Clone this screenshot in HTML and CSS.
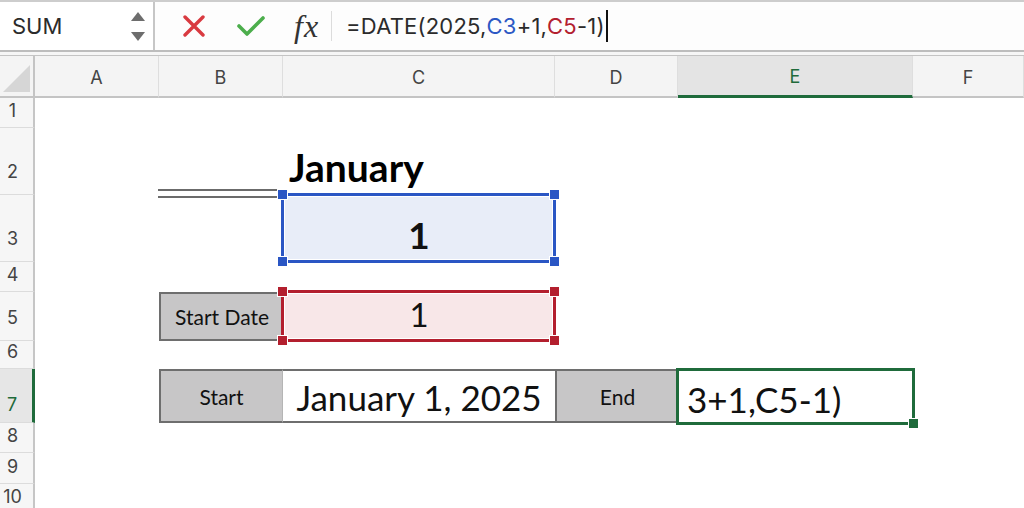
FILE: index.html
```html
<!DOCTYPE html>
<html lang="en">
<head>
    <meta charset="UTF-8">
    <meta name="viewport" content="width=device-width, initial-scale=1.0">
    <title>DATE formula</title>
    <link rel="stylesheet" href="styles.css">
</head>
<body>

<div class="formula-bar">
    <div class="name-box">
        <span class="name">SUM</span>
        <span class="spin">
            <svg width="14" height="9" viewBox="0 0 14 9"><path d="M7 0 L14 9 L0 9 Z" fill="#6d6d6d"/></svg>
            <svg width="14" height="9" viewBox="0 0 14 9"><path d="M0 0 L14 0 L7 9 Z" fill="#6d6d6d"/></svg>
        </span>
    </div>
    <div class="tools">
        <svg class="cancel" width="22" height="22" viewBox="0 0 22 22"><path d="M2 2 L20 20 M20 2 L2 20" stroke="#d93a40" stroke-width="3.4" stroke-linecap="round"/></svg>
        <svg class="enter" width="28" height="22" viewBox="0 0 28 22"><path d="M2 11 L10 19 L26 3" fill="none" stroke="#4cae4c" stroke-width="3.6" stroke-linecap="round" stroke-linejoin="round"/></svg>
        <span class="fx">fx</span>
        <span class="sep"></span>
    </div>
    <div class="formula">=DATE(2025,<span class="ref-blue">C3</span>+1,<span class="ref-red">C5</span>-1)<span class="caret"></span></div>
</div>
<div class="bar-gap"></div>

<div class="sheet">
    <!-- header -->
    <div class="corner"><span class="tri"></span></div>
    <div class="col-head">A</div>
    <div class="col-head">B</div>
    <div class="col-head">C</div>
    <div class="col-head">D</div>
    <div class="col-head active">E</div>
    <div class="col-head">F</div>

    <!-- 1 -->
    <div class="row-head">1</div>
    <div class="cell"></div><div class="cell"></div><div class="cell"></div><div class="cell"></div><div class="cell"></div><div class="cell"></div>

    <!-- 2 -->
    <div class="row-head tall">2</div>
    <div class="cell"></div>
    <div class="cell double-under"></div>
    <div class="cell title">January</div>
    <div class="cell"></div><div class="cell"></div><div class="cell"></div>

    <!-- 3 -->
    <div class="row-head tall">3</div>
    <div class="cell"></div><div class="cell"></div>
    <div class="cell range blue">
        <span class="value bold">1</span>
        <i class="h tl"></i><i class="h tr"></i><i class="h bl"></i><i class="h br"></i>
    </div>
    <div class="cell"></div><div class="cell"></div><div class="cell"></div>

    <!-- 4 -->
    <div class="row-head">4</div>
    <div class="cell"></div><div class="cell"></div><div class="cell"></div><div class="cell"></div><div class="cell"></div><div class="cell"></div>

    <!-- 5 -->
    <div class="row-head tall">5</div>
    <div class="cell"></div>
    <div class="cell label boxed">Start Date</div>
    <div class="cell range red">
        <span class="value">1</span>
        <i class="h tl"></i><i class="h tr"></i><i class="h bl"></i><i class="h br"></i>
    </div>
    <div class="cell"></div><div class="cell"></div><div class="cell"></div>

    <!-- 6 -->
    <div class="row-head">6</div>
    <div class="cell"></div><div class="cell"></div><div class="cell"></div><div class="cell"></div><div class="cell"></div><div class="cell"></div>

    <!-- 7 -->
    <div class="row-head current mid">7</div>
    <div class="cell"></div>
    <div class="cell label strip first">Start</div>
    <div class="cell big strip">January 1, 2025</div>
    <div class="cell label strip last">End</div>
    <div class="cell big editing">3+1,C5-1)<i class="fill-handle"></i></div>
    <div class="cell"></div>

    <!-- 8 -->
    <div class="row-head">8</div>
    <div class="cell"></div><div class="cell"></div><div class="cell"></div><div class="cell"></div><div class="cell"></div><div class="cell"></div>

    <!-- 9 -->
    <div class="row-head">9</div>
    <div class="cell"></div><div class="cell"></div><div class="cell"></div><div class="cell"></div><div class="cell"></div><div class="cell"></div>

    <!-- 10 -->
    <div class="row-head">10</div>
    <div class="cell"></div><div class="cell"></div><div class="cell"></div><div class="cell"></div><div class="cell"></div><div class="cell"></div>
</div>

</body>
</html>
```

FILE: styles.css
```css
*{
    margin: 0;
    padding: 0;
    box-sizing: border-box;
}

body{
    width: 1024px;
    height: 508px;
    overflow: hidden;
    background: #fff;
    font-family: Inter, 'Open Sans', sans-serif;
    color: #333;
}

/* formula bar */
.formula-bar{
    display: flex;
    height: 52px;
    border-top: 2px solid #cdcdcd;
    border-bottom: 2px solid #bdbdbd;
    background: #fdfdfd;
}
.name-box{
    width: 155px;
    display: flex;
    align-items: center;
    justify-content: space-between;
    padding: 0 8px 0 12px;
    border-right: 2px solid #c6c6c6;
    background: #fff;
}
.name-box .name{
    font-size: 22px;
    color: #2b2b2b;
}
.spin{
    display: flex;
    flex-direction: column;
    gap: 11px;
}
.spin svg{
    display: block;
}
.tools{
    display: flex;
    align-items: center;
    padding-left: 28px;
}
.tools .enter{
    margin-left: 32px;
}
.tools .fx{
    margin-left: 29px;
    font-family: 'Liberation Serif', serif;
    font-style: italic;
    font-size: 32px;
    color: #333;
    letter-spacing: 1px;
}
.tools .sep{
    width: 1px;
    height: 30px;
    background: #dcdcdc;
    margin-left: 12px;
}
.formula{
    display: flex;
    align-items: center;
    padding-left: 14px;
    font-size: 22px;
    letter-spacing: 0.2px;
    color: #2b2b2b;
}
.ref-blue{
    color: #2c58c4;
}
.ref-red{
    color: #b3202f;
}
.caret{
    width: 2px;
    height: 32px;
    background: #111;
    margin-left: 1px;
}
.bar-gap{
    height: 4px;
    background: #f6f6f6;
    border-bottom: 1px solid #c4c4c4;
}

/* sheet */
.sheet{
    display: grid;
    grid-template-columns: 35px 124px 124px 272px 123px 235px 1fr;
    grid-template-rows: 42px 30px 67px 67px 30px 49px 28px 54px 30px 31px 30px;
}
.corner{
    position: relative;
    background: #f4f4f4;
    border-right: 2px solid #c4c4c4;
    border-bottom: 2px solid #c4c4c4;
}
.corner .tri{
    position: absolute;
    right: 3px;
    bottom: 4px;
    width: 27px;
    height: 27px;
    background: #d6d6d6;
    clip-path: polygon(100% 0, 100% 100%, 0 100%);
}
.col-head{
    display: flex;
    align-items: center;
    justify-content: center;
    padding-top: 2px;
    background: #f4f4f4;
    border-right: 1px solid #dedede;
    border-bottom: 2px solid #c4c4c4;
    font-size: 18px;
    color: #444;
}
.col-head.active{
    background: #e4e4e4;
    color: #1f6b3b;
    border-bottom: 3px solid #1f6b3b;
}
.row-head{
    display: flex;
    align-items: flex-end;
    justify-content: center;
    padding: 0 8px 7px 0;
    background: #f6f6f6;
    border-right: 2px solid #c6c6c6;
    border-bottom: 1px solid #dcdcdc;
    font-size: 18px;
    line-height: 1;
    color: #444;
}
.row-head.tall{
    padding-bottom: 13px;
}
.row-head.mid{
    padding-bottom: 8px;
}
.row-head.current{
    background: #e6e6e6;
    color: #1f6b3b;
    border-right: 3px solid #1f6b3b;
}

.cell{
    position: relative;
    display: flex;
    align-items: flex-end;
    justify-content: center;
    font-family: Lato, 'Open Sans', sans-serif;
    color: #111;
}

.cell.double-under::after{
    content: '';
    position: absolute;
    left: -1px;
    right: 0;
    bottom: -3px;
    height: 5px;
    border-top: 2px solid #6b6b6b;
    border-bottom: 2px solid #6b6b6b;
}

.cell.title{
    justify-content: flex-start;
    padding: 0 0 8px 6px;
    font-size: 39px;
    font-weight: 700;
    line-height: 1;
    color: #000;
    white-space: nowrap;
}

/* highlighted ranges */
.range{
    z-index: 1;
}
.range::before{
    content: '';
    position: absolute;
    top: -2px;
    left: -2px;
    right: -1px;
    bottom: -1px;
    border: 3px solid;
    box-shadow: inset 0 0 0 1px #fff;
}
.range.blue{
    background: #e8edf8;
    padding-bottom: 9px;
}
.range.blue::before{
    border-color: #2a56c4;
}
.range.red{
    background: #f8e7e8;
    padding-bottom: 10px;
}
.range.red::before{
    border-color: #b31f2e;
}
.range .value{
    position: relative;
    font-size: 36px;
    line-height: 1;
}
.range .value.bold{
    font-weight: 700;
    font-size: 37px;
}
.range.red .value{
    font-size: 33px;
}
.h{
    position: absolute;
    width: 11px;
    height: 11px;
    border: 1px solid #fff;
}
.blue .h{
    background: #2a56c4;
}
.red .h{
    background: #b31f2e;
}
.h.tl{ top: -6px; left: -6px; }
.h.tr{ top: -6px; right: -5px; }
.h.bl{ bottom: -5px; left: -6px; }
.h.br{ bottom: -5px; right: -5px; }

/* labels */
.label{
    align-items: center;
    background: #c7c6c7;
    font-size: 21px;
    color: #111;
}
.boxed{
    border: 2px solid #6e6e6e;
    border-right: none;
}
.strip{
    border-top: 2px solid #6e6e6e;
    border-bottom: 2px solid #6e6e6e;
}
.strip.first{
    border-left: 2px solid #6e6e6e;
    border-right: 1px solid #b5b5b5;
}
.strip.last{
    border-left: 2px solid #6e6e6e;
}
.big{
    font-size: 35px;
    line-height: 1;
    padding-bottom: 6px;
    white-space: nowrap;
}
.cell.editing{
    justify-content: flex-start;
    padding-left: 8px;
    border: 3px solid #1f6b3b;
    margin: -1px -2px -2px -2px;
    padding-bottom: 5px;
    z-index: 1;
}
.fill-handle{
    position: absolute;
    right: -7px;
    bottom: -7px;
    width: 11px;
    height: 11px;
    background: #1f6b3b;
    border: 1px solid #fff;
}
```
